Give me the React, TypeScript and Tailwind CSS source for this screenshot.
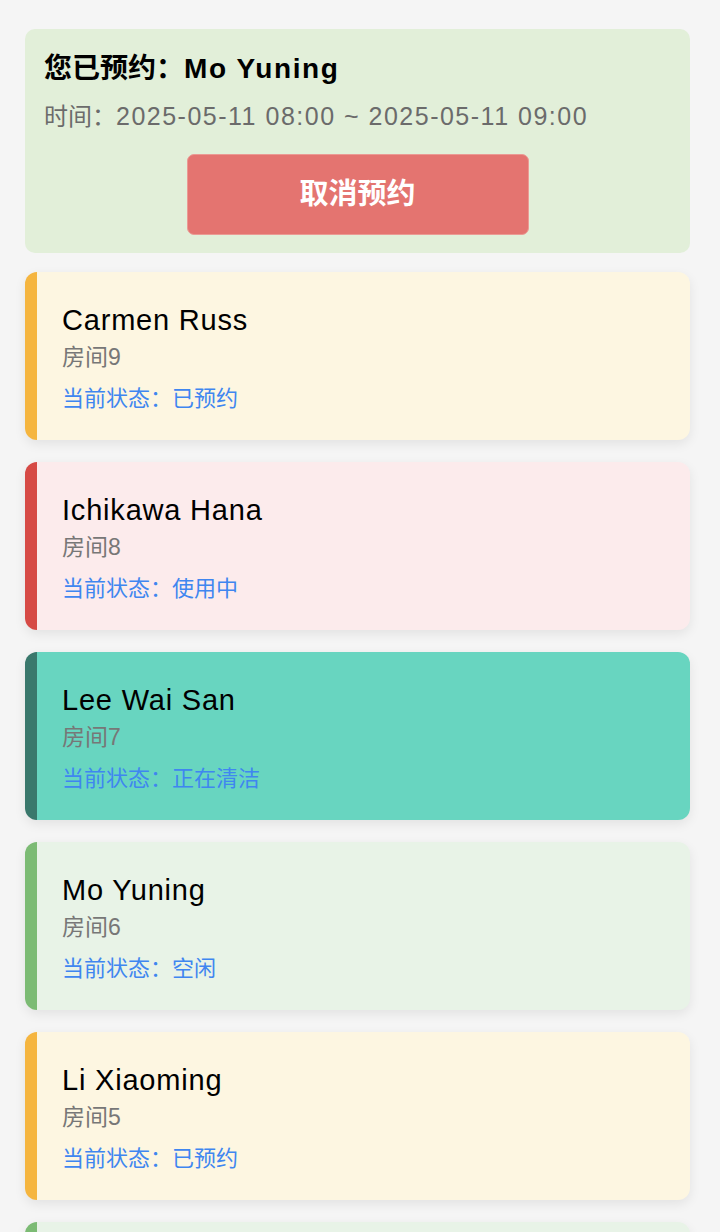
import React from "react";

const font = { fontFamily: '"Liberation Sans", "Noto Sans CJK SC", sans-serif' };

type Room = { name: string; room: string; status: string; bg: string; border: string };

const rooms: Room[] = [
  { name: "Carmen Russ", room: "房间9", status: "已预约", bg: "bg-[#fdf6e1]", border: "border-[#f5b53f]" },
  { name: "Ichikawa Hana", room: "房间8", status: "使用中", bg: "bg-[#fcebec]", border: "border-[#d64a45]" },
  { name: "Lee Wai San", room: "房间7", status: "正在清洁", bg: "bg-[#68d5c0]", border: "border-[#3a786c]" },
  { name: "Mo Yuning", room: "房间6", status: "空闲", bg: "bg-[#e8f3e7]", border: "border-[#7cbb74]" },
  { name: "Li Xiaoming", room: "房间5", status: "已预约", bg: "bg-[#fdf6e1]", border: "border-[#f5b53f]" },
  { name: "Zhang Wei", room: "房间4", status: "空闲", bg: "bg-[#e8f3e7]", border: "border-[#7cbb74]" },
];

export default function App() {
  return (
    <div className="h-[1232px] w-[720px] overflow-hidden bg-[#f5f5f5] pl-[25px] pr-[30px] pt-[29px]" style={font}>
      <div className="rounded-[10px] bg-[#e2efd9] px-[19px] pt-[18px] pb-[18px]">
        <div className="text-[28px] leading-[44px] font-bold text-black">
          您已预约：<span className="tracking-[1.6px]">Mo Yuning</span>
        </div>
        <div className="mt-[7px] whitespace-nowrap text-[24px] leading-[36px] text-[#6b6b6b]">
          时间：<span className="text-[25px] tracking-[1.5px]">2025-05-11 08:00 ~ 2025-05-11 09:00</span>
        </div>
        <div className="mt-[19px] flex justify-center">
          <button className="h-[81px] w-[342px] rounded-[7px] border border-[#eb9a94] bg-[#e47470] text-[29px] font-bold text-white">
            取消预约
          </button>
        </div>
      </div>
      <div className="mt-[19px] flex flex-col gap-[22px]">
        {rooms.map((r, i) => (
          <div
            key={i}
            className={`h-[168px] shrink-0 rounded-[12px] border-l-[12px] ${r.border} ${r.bg} pl-[25px] pt-[28px] shadow-[0_4px_12px_rgba(0,0,0,0.08)]`}
          >
            <div className="text-[29px] leading-[41px] tracking-[0.8px] text-black">{r.name}</div>
            <div className="text-[23px] leading-[32px] text-[#777777]">{r.room}</div>
            <div className="mt-[11px] text-[22px] leading-[30px] text-[#3f86f0]">当前状态：{r.status}</div>
          </div>
        ))}
      </div>
    </div>
  );
}
